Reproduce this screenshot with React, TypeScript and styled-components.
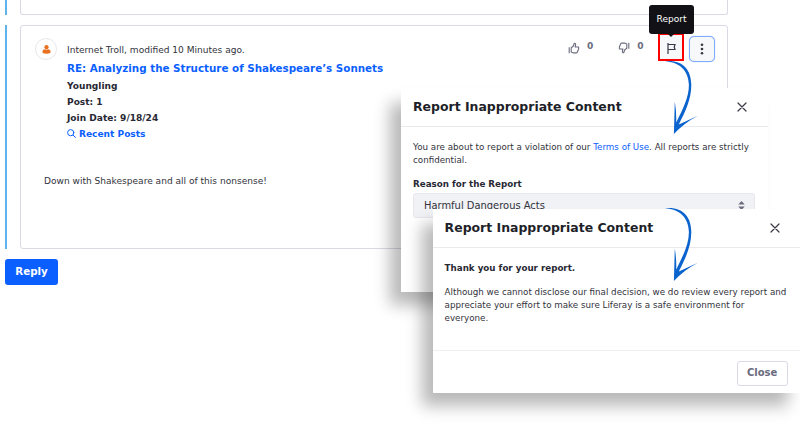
import React from "react";
import styled, { createGlobalStyle } from "styled-components";

const Global = createGlobalStyle`
  * { box-sizing: border-box; }
  body { margin: 0; background: #fff; }
  button { margin: 0; font-family: inherit; }
`;

const Page = styled.main`
  position: relative;
  width: 800px;
  height: 423px;
  overflow: hidden;
  background: #fff;
  color: #32333c;
  font: 9.05px/13px "DejaVu Sans", sans-serif;
  white-space: nowrap;
`;

const Thread = styled.section`
  display: flex;
  flex-direction: column;
  align-items: flex-start;
  gap: 10px;
  padding-left: 5px;
`;

const Branch = styled.div<{ $height: number }>`
  width: 723px;
  height: ${(p) => p.$height}px;
  padding-left: 13px;
  border-left: 2px solid #5fb4f0;
`;

const Card = styled.article<{ $clipped?: boolean }>`
  height: 100%;
  border: 1px solid #d9dae6;
  border-top-width: ${(p) => (p.$clipped ? 0 : 1)}px;
  border-radius: ${(p) => (p.$clipped ? "0 0 3px 3px" : "3px")};
`;

const CardTop = styled.div`
  display: flex;
  padding: 10px 12px 0 14px;
`;

const Avatar = styled.div`
  display: flex;
  width: 22px;
  height: 22px;
  margin-top: 2px;
  align-items: center;
  justify-content: center;
  border: 1px solid #e7e7ed;
  border-radius: 50%;
`;

const Author = styled.div`
  display: flex;
  flex: 1;
  flex-direction: column;
  padding: 8px 0 0 10px;
`;

const PostTitle = styled.a`
  margin: 3px 0 2px;
  color: #0b5fff;
  font-size: 10.33px;
  font-weight: bold;
  line-height: 16px;
`;

const Stat = styled.div`
  height: 16px;
  color: #272833;
  font-weight: bold;
  line-height: 16px;
`;

const RecentLink = styled.a`
  display: flex;
  height: 16px;
  align-items: center;
  gap: 3px;
  color: #0b5fff;
  font-weight: bold;
  svg { margin-bottom: 2px; }
`;

const Actions = styled.div`
  display: flex;
  height: 28px;
  align-items: flex-start;
`;

const Vote = styled.div<{ $gap: number }>`
  display: flex;
  align-items: center;
  gap: 7px;
  height: 21px;
  margin-right: ${(p) => p.$gap}px;
  color: #6b6c7e;
  font-weight: bold;
  svg { margin-top: 2px; }
`;

const ReportFrame = styled.div`
  position: relative;
  display: flex;
  width: 26px;
  height: 28px;
  margin: -3px 5px 0 0;
  align-items: center;
  justify-content: center;
  border: 2px solid #fe0000;
  background: #f7f8f9;
  svg { margin-top: 2px; }
`;

const Tooltip = styled.div`
  position: absolute;
  left: -11px;
  bottom: 25px;
  width: 45px;
  height: 29px;
  border-radius: 3px;
  background: #111116;
  color: #fff;
  line-height: 28px;
  text-align: center;
  &::after {
    content: "";
    position: absolute;
    left: 19px;
    top: 29px;
    border: solid transparent;
    border-width: 3px 3px 0;
    border-top-color: #111116;
  }
`;

const MenuButton = styled.button`
  display: flex;
  width: 26px;
  height: 26px;
  padding: 0;
  align-items: center;
  justify-content: center;
  border: 1px solid #80acff;
  border-radius: 5px;
  background: #f7f8f9;
  box-shadow: 0 0 1px #80acff;
`;

const Message = styled.p`
  margin: 33px 0 0 23px;
`;

const ReplyButton = styled.button`
  width: 53px;
  height: 26px;
  padding: 0 0 1px;
  border: 0;
  border-radius: 3px;
  background: #0b5fff;
  color: #fff;
  font-size: 10.3px;
  font-weight: bold;
  line-height: 23px;
`;

const Dialog = styled.section<{ $x: number; $y: number; $width: number; $height: number }>`
  position: absolute;
  left: ${(p) => p.$x}px;
  top: ${(p) => p.$y}px;
  display: flex;
  flex-direction: column;
  width: ${(p) => p.$width}px;
  height: ${(p) => p.$height}px;
  background: #fff;
  box-shadow: -12px 14px 15px -1px rgba(0, 0, 0, 0.28);
`;

const DialogHeader = styled.header`
  display: flex;
  height: 39px;
  padding: 0 21px 1px 12px;
  align-items: center;
  justify-content: space-between;
  border-bottom: 1px solid #e9e9ee;
`;

const DialogTitle = styled.h2`
  margin: 0;
  color: #1e1f29;
  font-size: 12.46px;
  line-height: 20px;
`;

const DialogBody = styled.div`
  flex: 1;
  padding: 14px 13px 0 12px;
  font-size: 8.73px;
`;

const Paragraph = styled.p`
  margin: 0 0 11px;
  line-height: 13.2px;
`;

const Strong = styled.p<{ $gap: number }>`
  margin: 0 0 ${(p) => p.$gap}px;
  color: #272833;
  font-weight: bold;
`;

const TermsLink = styled.a`
  color: #0b5fff;
`;

const Select = styled.div`
  display: flex;
  height: 25px;
  padding: 0 9px 0 10px;
  align-items: center;
  justify-content: space-between;
  border: 1px solid #e7e7ed;
  border-radius: 3px;
  background: #f1f2f5;
  font-size: 9.93px;
`;

const DialogFooter = styled.footer`
  display: flex;
  height: 43px;
  padding: 10px 13px 0 0;
  justify-content: flex-end;
  border-top: 1px solid #efeff3;
`;

const CloseButton = styled.button`
  width: 51px;
  height: 25px;
  padding: 0 0 2px;
  border: 1px solid #d9dae6;
  border-radius: 3px;
  background: #fff;
  color: #6b6c7e;
  font-size: 10px;
  font-weight: bold;
`;

const ArrowMark = styled.svg<{ $x: number; $y: number }>`
  position: absolute;
  left: ${(p) => p.$x}px;
  top: ${(p) => p.$y}px;
`;

const Thumb = ({ down = false }: { down?: boolean }) => (
  <svg width="12" height="12" viewBox="0 0 12 12" fill="none" stroke="#6b6c7e" strokeWidth="1.1" strokeLinejoin="round">
    <g transform={down ? "rotate(180 6 6)" : undefined}>
      <path d="M1.2 5.2v6" />
      <path d="M3.2 10V5.7L5.2 4.2 6.3 1.2q1.5 0 1.3 1.8L7.1 5h3.5v2l-1.3 3.3q-.2.6-1 .6H5.5Z" />
    </g>
  </svg>
);

const CrossIcon = () => (
  <svg width="10" height="10" viewBox="0 0 10 10" fill="none" stroke="#383946" strokeWidth="1.2" strokeLinecap="round">
    <path d="m1 1 8 8m0-8-8 8" />
  </svg>
);

const Arrow = ({ x, y }: { x: number; y: number }) => (
  <ArrowMark $x={x} $y={y} width="36" height="75" viewBox="0 0 36 75" fill="#0b63ce">
    <path d="M1 1.3C18-.5 27.2 9 27.3 25C27.2 40 21 52 14.8 64.5L33.9 55.7Q20 63 9.9 74L10.800 41.500Q12.600 52 12.200 62.500C19 49 25 37 24.900 25C24.500 10.500 15.500 2.200 1 1.300Z" />
  </ArrowMark>
);

const Dialogs = () => (
  <>
    <Dialog $x={401} $y={88} $width={367} $height={204}>
      <DialogHeader>
        <DialogTitle>Report Inappropriate Content</DialogTitle>
        <CrossIcon />
      </DialogHeader>
      <DialogBody>
        <Paragraph>
          You are about to report a violation of our <TermsLink>Terms of Use</TermsLink>. All reports are strictly
          <br />
          confidential.
        </Paragraph>
        <Strong $gap={2}>Reason for the Report</Strong>
        <Select>
          Harmful Dangerous Acts
          <svg width="7" height="9" viewBox="0 0 7 9" fill="#6b6c7e">
            <path d="M.3 3.600 3 .6q.5-.5 1 0l2.700 3ZM.3 5.400 3 8.400q.5.500 1 0l2.700-3Z" />
          </svg>
        </Select>
      </DialogBody>
    </Dialog>
    <Arrow x={664} y={60} />
    <Dialog $x={432.6} $y={209} $width={368} $height={184}>
      <DialogHeader>
        <DialogTitle>Report Inappropriate Content</DialogTitle>
        <CrossIcon />
      </DialogHeader>
      <DialogBody>
        <Strong $gap={11}>Thank you for your report.</Strong>
        <Paragraph>
          Although we cannot disclose our final decision, we do review every report and
          <br />
          appreciate your effort to make sure Liferay is a safe environment for
          <br />
          everyone.
        </Paragraph>
      </DialogBody>
      <DialogFooter>
        <CloseButton>Close</CloseButton>
      </DialogFooter>
    </Dialog>
    <Arrow x={664} y={207} />
  </>
);

export default function App() {
  return (
    <Page>
      <Global />
      <Thread>
        <Branch $height={15}>
          <Card $clipped />
        </Branch>
        <Branch $height={224}>
          <Card>
            <CardTop>
              <Avatar>
                <svg width="9" height="9" viewBox="0 0 9 9" fill="#e8701f">
                  <circle cx="4.500" cy="2.200" r="2.100" />
                  <path d="M.4 7.100q0-2.500 2.300-2.800 1.800.9 3.600 0 2.300.3 2.300 2.800 0 1.700-4.100 1.700T.4 7.100Z" />
                </svg>
              </Avatar>
              <Author>
                <span>Internet Troll, modified 10 Minutes ago.</span>
                <PostTitle>RE: Analyzing the Structure of Shakespeare’s Sonnets</PostTitle>
                <Stat>Youngling</Stat>
                <Stat>Post: 1</Stat>
                <Stat>Join Date: 9/18/24</Stat>
                <RecentLink>
                  <svg width="9" height="9" viewBox="0 0 9 9" fill="none" stroke="currentColor" strokeLinecap="round">
                    <circle cx="3.700" cy="3.700" r="3.100" />
                    <path d="m6.100 6.100 2.300 2.300" />
                  </svg>
                  Recent Posts
                </RecentLink>
              </Author>
              <Actions>
                <Vote $gap={25}>
                  <Thumb />0
                </Vote>
                <Vote $gap={14.5}>
                  <Thumb down />0
                </Vote>
                <ReportFrame>
                  <svg width="9" height="11" viewBox="0 0 9 11" fill="none" stroke="#383946" strokeWidth="1.200">
                    <path d="M1 0v11M1 1.500h7L7.200 4 8 6.500H1" />
                  </svg>
                  <Tooltip>Report</Tooltip>
                </ReportFrame>
                <MenuButton>
                  <svg width="4" height="12" viewBox="0 0 4 12" fill="#383946">
                    <circle cx="2" cy="1.800" r="1.300" />
                    <circle cx="2" cy="6" r="1.300" />
                    <circle cx="2" cy="10.200" r="1.300" />
                  </svg>
                </MenuButton>
              </Actions>
            </CardTop>
            <Message>Down with Shakespeare and all of this nonsense!</Message>
          </Card>
        </Branch>
        <ReplyButton>Reply</ReplyButton>
      </Thread>
      <Dialogs />
    </Page>
  );
}
